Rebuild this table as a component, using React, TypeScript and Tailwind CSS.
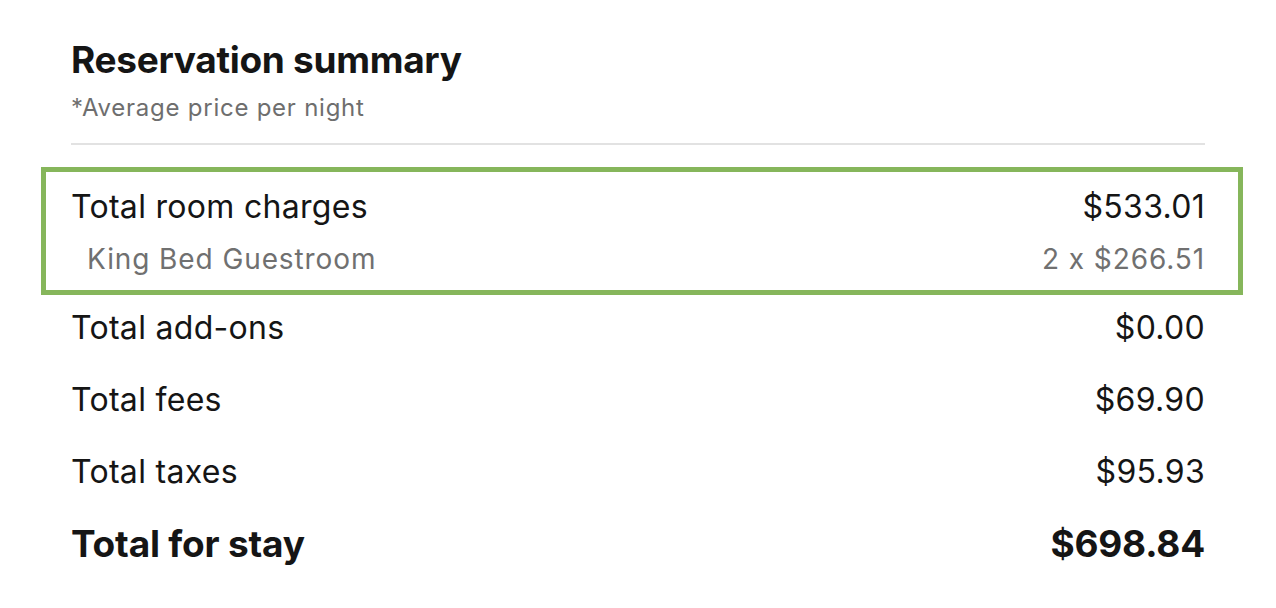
import React from "react";

const rows = [
  { label: "Total add-ons", value: "$0.00" },
  { label: "Total fees", value: "$69.90" },
  { label: "Total taxes", value: "$95.93" },
];

export default function App() {
  return (
    <div className="w-[1276px] h-[608px] bg-white font-['Inter',sans-serif] text-[#151515]">
      <div className="ml-[71px] w-[1134px] pt-[36px]">
        {/* Header */}
        <h1 className="text-[37px] leading-[48px] font-bold tracking-[-0.3px]">Reservation summary</h1>
        <p className="text-[24px] leading-[30px] tracking-[0.75px] text-[#6e6e6e] mt-[9px]">*Average price per night</p>
        <div className="h-[2px] bg-[#e2e2e2] mt-[20px]"></div>

        {/* Room charges, highlighted */}
        <div className="-ml-[30px] -mr-[38px] mt-[22px] border-[5px] border-[#86b65b] pl-[25px] pr-[33px] pt-[13px] pb-[11px]">
          <div className="flex justify-between text-[32px] leading-[44px] tracking-[0.3px]">
            <span>Total room charges</span>
            <span>$533.01</span>
          </div>
          <div className="flex justify-between text-[28px] leading-[40px] tracking-[0.9px] text-[#707070] mt-[10px]">
            <span className="pl-[16px]">King Bed Guestroom</span>
            <span>2 x $266.51</span>
          </div>
        </div>

        <div className="-mt-[3px]">
          {rows.map((r) => (
            <div key={r.label} className="flex justify-between text-[32px] leading-[72px] tracking-[0.3px]">
              <span>{r.label}</span>
              <span>{r.value}</span>
            </div>
          ))}

          <div className="flex justify-between text-[37px] leading-[72px] font-bold tracking-[-0.2px]">
            <span>Total for stay</span>
            <span>$698.84</span>
          </div>
        </div>
      </div>
    </div>
  );
}
